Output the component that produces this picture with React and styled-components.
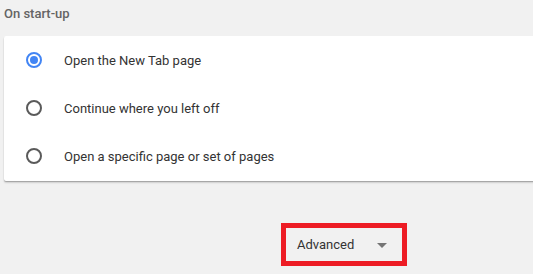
import React from 'react';
import styled, { createGlobalStyle } from 'styled-components';

const GlobalStyle = createGlobalStyle`
  html, body {
    margin: 0;
    padding: 0;
    background: #f1f1f1;
  }
  body {
    font-family: Roboto, "Liberation Sans", sans-serif;
    -webkit-font-smoothing: antialiased;
  }
`;

const Page = styled.div`
  width: 533px;
  height: 274px;
  overflow: hidden;
  padding-left: 4px;
  box-sizing: border-box;
`;

const SectionTitle = styled.div`
  height: 36px;
  padding-top: 6px;
  box-sizing: border-box;
  font-size: 13px;
  font-weight: 500;
  line-height: 16px;
  color: #646464;
`;

const Card = styled.div`
  width: 560px;
  background: #fff;
  border-radius: 2px;
  box-shadow: 0 1px 1px rgba(0, 0, 0, 0.24), 0 2px 2px rgba(0, 0, 0, 0.12);
  padding-bottom: 1px;
`;

const Row = styled.label`
  display: flex;
  align-items: center;
  height: 48px;
  padding-left: 22px;
  gap: 22px;
  font-size: 13px;
  color: #333;
  cursor: pointer;
`;

const Radio = styled.span`
  position: relative;
  width: 16px;
  height: 16px;
  box-sizing: border-box;
  border-radius: 50%;
  border: 2px solid ${(p) => (p.checked ? '#4285f4' : '#5a5a5a')};
  flex-shrink: 0;

  &::after {
    content: '';
    position: absolute;
    left: 2px;
    top: 2px;
    width: 8px;
    height: 8px;
    border-radius: 50%;
    background: #4285f4;
    display: ${(p) => (p.checked ? 'block' : 'none')};
  }
`;

const Footer = styled.div`
  display: flex;
  padding-top: 42px;
  padding-left: 277px;
`;

const AdvancedBox = styled.div`
  display: flex;
  align-items: center;
  width: 126px;
  height: 43px;
  box-sizing: border-box;
  border: 5px solid #ed1c24;
  padding-left: 11px;
  gap: 23px;
  font-size: 13px;
  color: #333;
`;

const Caret = styled.span`
  width: 0;
  height: 0;
  border-left: 5px solid transparent;
  border-right: 5px solid transparent;
  border-top: 5px solid #757575;
  margin-top: 1px;
`;

const options = [
  { label: 'Open the New Tab page', checked: true },
  { label: 'Continue where you left off' },
  { label: 'Open a specific page or set of pages' },
];

export default function App() {
  return (
    <Page>
      <GlobalStyle />
      <SectionTitle>On start-up</SectionTitle>
      <Card>
        {options.map((o) => (
          <Row key={o.label}>
            <Radio checked={o.checked} />
            {o.label}
          </Row>
        ))}
      </Card>
      <Footer>
        <AdvancedBox>
          Advanced
          <Caret />
        </AdvancedBox>
      </Footer>
    </Page>
  );
}
